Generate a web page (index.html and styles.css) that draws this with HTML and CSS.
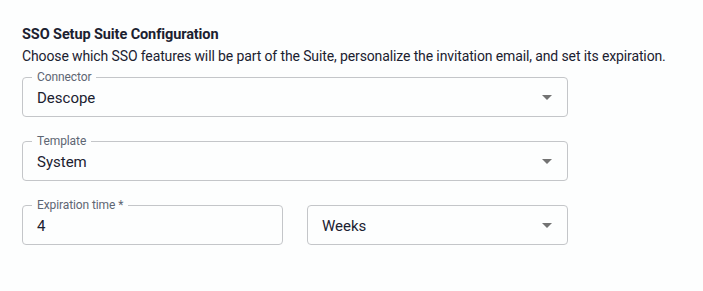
FILE: index.html
```html
<!DOCTYPE html>
<html>
<head>
<meta charset="utf-8">
<link rel="stylesheet" href="styles.css">
</head>
<body>
<div class="page">
  <h1 class="title">SSO Setup Suite Configuration</h1>
  <p class="subtitle">Choose which SSO features will be part of the Suite, personalize the invitation email, and set its expiration.</p>
  <div class="form">
    <div class="field select">
      <span class="label">Connector</span>
      <span class="value">Descope</span>
      <span class="arrow"></span>
    </div>
    <div class="field select">
      <span class="label">Template</span>
      <span class="value">System</span>
      <span class="arrow"></span>
    </div>
    <div class="row">
      <div class="field">
        <span class="label">Expiration time *</span>
        <span class="value">4</span>
      </div>
      <div class="field select">
        <span class="value">Weeks</span>
        <span class="arrow"></span>
      </div>
    </div>
  </div>
</div>
</body>
</html>
```
FILE: styles.css
```css
html, body {
  margin: 0;
  background: #fdfefe;
}
.page {
  padding: 25px 0 0 22px;
  width: 546px;
  font-family: Roboto, "Liberation Sans", sans-serif;
  color: #1b2130;
}
.title {
  margin: 0;
  font-size: 14.5px;
  font-weight: 700;
  line-height: 20px;
  letter-spacing: -0.1px;
}
.subtitle {
  margin: 2px 0 0;
  font-size: 14px;
  line-height: 19px;
  white-space: nowrap;
  letter-spacing: -0.12px;
}
.form {
  margin-top: 11px;
  display: flex;
  flex-direction: column;
  gap: 24px;
}
.field {
  height: 40px;
  box-sizing: border-box;
  border: 1px solid #c4c6c9;
  border-radius: 4px;
  padding: 0 14px;
  display: flex;
  align-items: center;
  justify-content: space-between;
  position: relative;
}
.label {
  position: absolute;
  left: 9px;
  top: -7px;
  padding: 0 5px;
  background: #fdfefe;
  font-size: 12px;
  color: #5e6673;
  line-height: 12px;
  letter-spacing: -0.1px;
}
.value {
  font-size: 15px;
  line-height: 20px;
  margin-top: 2px;
}
.arrow {
  width: 0;
  height: 0;
  margin-right: 1px;
  border-left: 5px solid transparent;
  border-right: 5px solid transparent;
  border-top: 5px solid #737373;
}
.row {
  display: grid;
  grid-template-columns: 1fr 1fr;
  gap: 24px;
}
```
